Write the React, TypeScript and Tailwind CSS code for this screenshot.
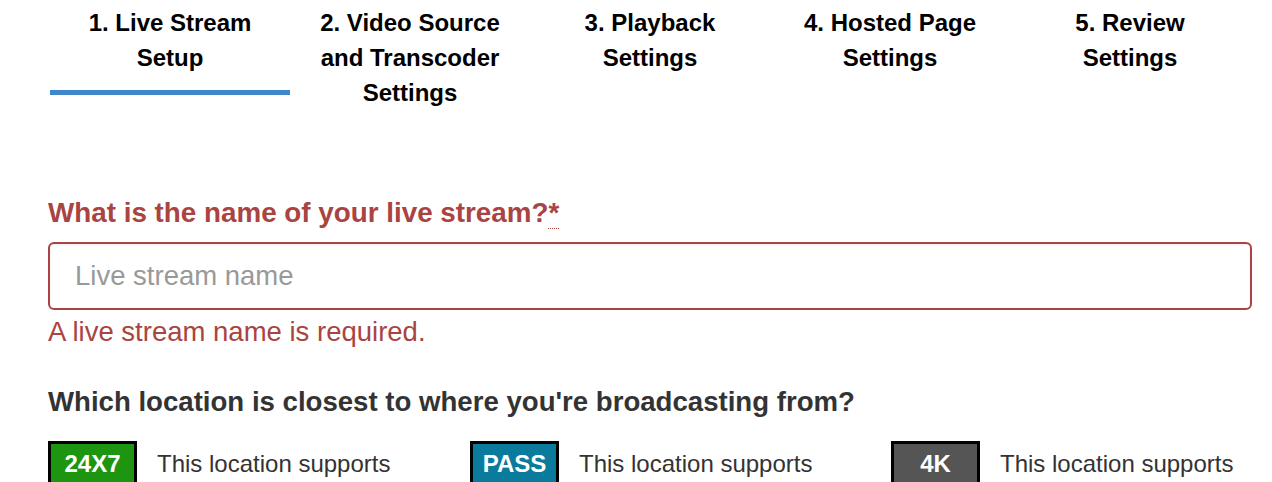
import React from 'react';

const steps = [
  { label: ['1. Live Stream', 'Setup'], active: true },
  { label: ['2. Video Source', 'and Transcoder', 'Settings'], active: false },
  { label: ['3. Playback', 'Settings'], active: false },
  { label: ['4. Hosted Page', 'Settings'], active: false },
  { label: ['5. Review', 'Settings'], active: false },
];

const locations = [
  { tag: '24X7', color: 'bg-[#1e9510]' },
  { tag: 'PASS', color: 'bg-[#0a7b9c]' },
  { tag: '4K', color: 'bg-[#555555]' },
];

export default function App() {
  return (
    <div
      className="h-[482px] w-[1272px] overflow-hidden bg-white"
      style={{ fontFamily: '"Liberation Sans", Arial, sans-serif' }}
    >
      {/* wizard steps */}
      <div className="flex h-[110px] pl-[50px] pt-[5px]">
        {steps.map((s) => (
          <div key={s.label[0]} className="flex w-[240px] flex-col">
            <div className="text-center text-[24px] font-bold leading-[35px] text-black">
              {s.label.map((l) => (
                <div key={l}>{l}</div>
              ))}
            </div>
            {s.active && <div className="mt-[15px] h-[5px] w-full bg-[#3f87c9]" />}
          </div>
        ))}
      </div>

      <div className="w-[1272px] pl-[48px] pt-[88px]">
        <label className="block text-[27.8px] font-bold leading-[30px] text-[#a94442]">
          What is the name of your live stream?
          <abbr title="required" className="border-b border-dotted border-[#a94442] no-underline">
            *
          </abbr>
        </label>
        <input
          type="text"
          placeholder="Live stream name"
          className="mt-[14px] box-border block h-[68px] w-[1204px] rounded-[6px] border-2 border-[#a94442] px-[25px] text-[27.5px] text-[#555] shadow-[inset_0_1px_2px_rgba(0,0,0,0.08)] outline-none placeholder:text-[#999]"
        />
        <div className="mt-[7px] text-[27.5px] leading-[30px] text-[#a94442]">A live stream name is required.</div>

        <div className="mt-[40px] text-[27.6px] font-bold leading-[30px] text-[#333]">
          Which location is closest to where you're broadcasting from?
        </div>

        <div className="mt-[24px] grid grid-cols-[422px_421px_1fr]">
          {locations.map((loc) => (
            <div key={loc.tag} className="flex items-center whitespace-nowrap">
              <span
                className={`flex h-[46px] w-[89px] shrink-0 items-center justify-center border-[3px] border-black text-[24px] font-bold text-white ${loc.color}`}
              >
                {loc.tag}
              </span>
              <span className="ml-[20px] text-[24px] text-[#333]">This location supports</span>
            </div>
          ))}
        </div>
      </div>
    </div>
  );
}
